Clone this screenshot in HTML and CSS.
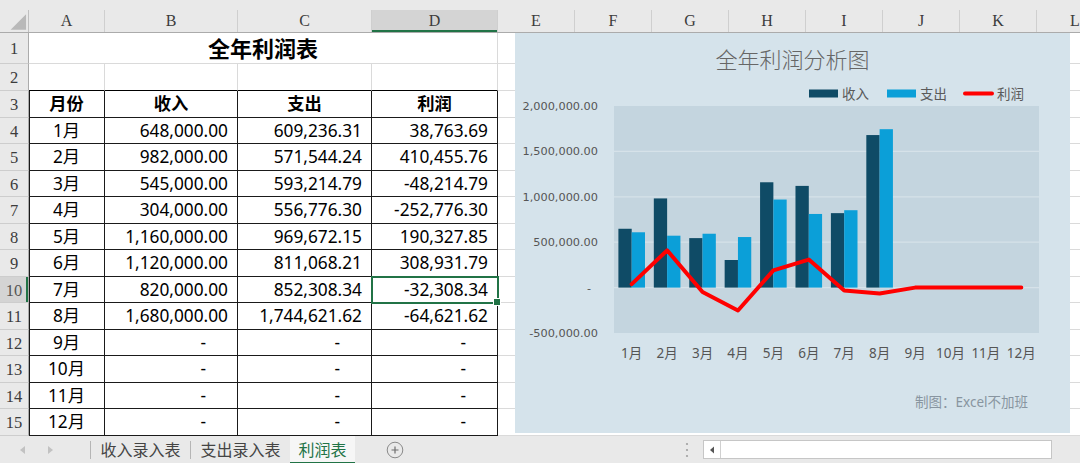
FILE: index.html
```html
<!DOCTYPE html>
<html lang="zh">
<head>
<meta charset="utf-8">
<title>全年利润表</title>
<link rel="stylesheet" href="styles.css">
</head>
<body>
<div class="app">
  <div class="colhdr">
    <div class="ch corner"><svg width="29" height="22" viewBox="0 0 29 22"><polygon points="27,4 27,20 11,20" fill="#b9b9b9"/></svg></div>
    <div class="ch">A</div><div class="ch">B</div><div class="ch">C</div><div class="ch sel">D</div>
    <div class="ch">E</div><div class="ch">F</div><div class="ch">G</div><div class="ch">H</div>
    <div class="ch">I</div><div class="ch">J</div><div class="ch">K</div><div class="ch">L</div>
  </div>

  <div class="sheet">
    <div class="c rh">1</div><div class="c title">全年利润表</div><div class="c rest"></div>
    <div class="c rh">2</div><div class="c top"></div><div class="c top"></div><div class="c top"></div><div class="c top"></div><div class="c rest"></div>

    <div class="c rh">3</div><div class="c t first hd">月份</div><div class="c t hd">收入</div><div class="c t hd">支出</div><div class="c t hd">利润</div><div class="c rest"></div>
    <div class="c rh">4</div><div class="c t first ctr">1月</div><div class="c t num">648,000.00</div><div class="c t num">609,236.31</div><div class="c t num">38,763.69</div><div class="c rest"></div>
    <div class="c rh">5</div><div class="c t first ctr">2月</div><div class="c t num">982,000.00</div><div class="c t num">571,544.24</div><div class="c t num">410,455.76</div><div class="c rest"></div>
    <div class="c rh">6</div><div class="c t first ctr">3月</div><div class="c t num">545,000.00</div><div class="c t num">593,214.79</div><div class="c t num">-48,214.79</div><div class="c rest"></div>
    <div class="c rh">7</div><div class="c t first ctr">4月</div><div class="c t num">304,000.00</div><div class="c t num">556,776.30</div><div class="c t num">-252,776.30</div><div class="c rest"></div>
    <div class="c rh">8</div><div class="c t first ctr">5月</div><div class="c t num">1,160,000.00</div><div class="c t num">969,672.15</div><div class="c t num">190,327.85</div><div class="c rest"></div>
    <div class="c rh">9</div><div class="c t first ctr">6月</div><div class="c t num">1,120,000.00</div><div class="c t num">811,068.21</div><div class="c t num">308,931.79</div><div class="c rest"></div>
    <div class="c rh selr">10</div><div class="c t first ctr">7月</div><div class="c t num">820,000.00</div><div class="c t num">852,308.34</div><div class="c t num selc">-32,308.34</div><div class="c rest"></div>
    <div class="c rh">11</div><div class="c t first ctr">8月</div><div class="c t num">1,680,000.00</div><div class="c t num">1,744,621.62</div><div class="c t num">-64,621.62</div><div class="c rest"></div>
    <div class="c rh">12</div><div class="c t first ctr">9月</div><div class="c t dash">-</div><div class="c t dash">-</div><div class="c t dash">-</div><div class="c rest"></div>
    <div class="c rh">13</div><div class="c t first ctr">10月</div><div class="c t dash">-</div><div class="c t dash">-</div><div class="c t dash">-</div><div class="c rest"></div>
    <div class="c rh">14</div><div class="c t first ctr">11月</div><div class="c t dash">-</div><div class="c t dash">-</div><div class="c t dash">-</div><div class="c rest"></div>
    <div class="c rh">15</div><div class="c t first ctr">12月</div><div class="c t dash">-</div><div class="c t dash">-</div><div class="c t dash">-</div><div class="c rest"></div>
  </div>

  <div class="chart">
    <svg width="555" height="400" viewBox="0 0 555 400">
      <text x="277.5" y="34.5" class="ttl" text-anchor="middle">全年利润分析图</text>

      <rect x="294" y="56.5" width="29" height="8" fill="#0f4b66"/>
      <text x="327" y="65.5" class="lg">收入</text>
      <rect x="372" y="56.5" width="29" height="8" fill="#0b9fd8"/>
      <text x="405" y="65.5" class="lg">支出</text>
      <line x1="450" y1="60.5" x2="477" y2="60.5" stroke="#ff0000" stroke-width="4" stroke-linecap="round"/>
      <text x="482" y="65.5" class="lg">利润</text>

      <rect x="99" y="73" width="425" height="227" fill="#c4d5df"/>
      <g stroke="#d6e2e9" stroke-width="1.2">
        <line x1="99" y1="118.4" x2="524" y2="118.4"/>
        <line x1="99" y1="163.8" x2="524" y2="163.8"/>
        <line x1="99" y1="209.2" x2="524" y2="209.2"/>
        <line x1="99" y1="254.6" x2="524" y2="254.6"/>
      </g>

      <g fill="#0f4b66">
        <rect x="103.4" y="195.76" width="13.3" height="58.84"/>
        <rect x="138.82" y="165.43" width="13.3" height="89.17"/>
        <rect x="174.23" y="205.11" width="13.3" height="49.49"/>
        <rect x="209.65" y="227" width="13.3" height="27.6"/>
        <rect x="245.07" y="149.27" width="13.3" height="105.33"/>
        <rect x="280.48" y="152.9" width="13.3" height="101.7"/>
        <rect x="315.9" y="180.14" width="13.3" height="74.46"/>
        <rect x="351.32" y="102.06" width="13.3" height="152.54"/>
      </g>
      <g fill="#0b9fd8">
        <rect x="116.7" y="199.28" width="13.3" height="55.32"/>
        <rect x="152.12" y="202.7" width="13.3" height="51.9"/>
        <rect x="187.53" y="200.74" width="13.3" height="53.86"/>
        <rect x="222.95" y="204.04" width="13.3" height="50.56"/>
        <rect x="258.37" y="166.55" width="13.3" height="88.05"/>
        <rect x="293.78" y="180.96" width="13.3" height="73.64"/>
        <rect x="329.2" y="177.21" width="13.3" height="77.39"/>
        <rect x="364.62" y="96.19" width="13.3" height="158.41"/>
      </g>

      <polyline fill="none" stroke="#ff0000" stroke-width="4" stroke-linejoin="round" stroke-linecap="round"
        points="116.71,251.08 152.13,217.33 187.54,258.98 222.96,277.55 258.38,237.32 293.79,226.55 329.21,257.53 364.63,260.47 400.04,254.6 435.46,254.6 470.88,254.6 506.29,254.6"/>

      <g class="yl" text-anchor="end">
        <text x="83" y="77">2,000,000.00</text>
        <text x="83" y="122.4">1,500,000.00</text>
        <text x="83" y="167.8">1,000,000.00</text>
        <text x="83" y="213.2">500,000.00</text>
        <text x="76" y="258.6">-</text>
        <text x="83" y="304">-500,000.00</text>
      </g>

      <g class="xl" text-anchor="middle">
        <text x="116.71" y="325">1月</text>
        <text x="152.13" y="325">2月</text>
        <text x="187.54" y="325">3月</text>
        <text x="222.96" y="325">4月</text>
        <text x="258.38" y="325">5月</text>
        <text x="293.79" y="325">6月</text>
        <text x="329.21" y="325">7月</text>
        <text x="364.63" y="325">8月</text>
        <text x="400.04" y="325">9月</text>
        <text x="435.46" y="325">10月</text>
        <text x="470.88" y="325">11月</text>
        <text x="506.29" y="325">12月</text>
      </g>

      <text x="513" y="374" class="ft" text-anchor="end">制图：Excel不加班</text>
    </svg>
  </div>

  <div class="tabs">
    <div class="nav">
      <svg width="90" height="28" viewBox="0 0 90 28">
        <polygon points="20,14 25,10 25,18" fill="#c2c2c2"/>
        <polygon points="53,14 48,10 48,18" fill="#c2c2c2"/>
      </svg>
    </div>
    <span class="sep"></span>
    <div class="tab">收入录入表</div>
    <span class="sep"></span>
    <div class="tab">支出录入表</div>
    <div class="tab active">利润表</div>
    <div class="add">
      <svg width="18" height="18" viewBox="0 0 18 18">
        <circle cx="9" cy="9" r="7.8" fill="none" stroke="#8a8a8a" stroke-width="1"/>
        <path d="M9 5.5v7M5.5 9h7" stroke="#6f6f6f" stroke-width="1.2"/>
      </svg>
    </div>
    <div class="spacer"></div>
    <div class="dots">
      <svg width="4" height="16" viewBox="0 0 4 16"><circle cx="2" cy="2" r="1.1" fill="#a0a0a0"/><circle cx="2" cy="8" r="1.1" fill="#a0a0a0"/><circle cx="2" cy="14" r="1.1" fill="#a0a0a0"/></svg>
    </div>
    <div class="hscroll">
      <div class="harrow"><svg width="6" height="8" viewBox="0 0 6 8"><polygon points="1,4 5,0.5 5,7.5" fill="#555"/></svg></div>
      <div class="track"></div>
    </div>
  </div>
</div>
</body>
</html>
```

FILE: styles.css
```css
* { box-sizing: border-box; margin: 0; padding: 0; }
html, body { width: 1080px; height: 463px; overflow: hidden; background: #ffffff; }
body { font-family: "Noto Sans", "Noto Sans CJK SC", sans-serif; color: #000; }

.app { position: relative; width: 1080px; height: 463px; overflow: hidden; display: flex; flex-direction: column; }

/* column header */
.colhdr {
  display: grid;
  grid-template-columns: 29px 76px 133px 134px 126px repeat(8, 77px);
  width: 1114px;
  height: 33px;
  padding-top: 10px;
  background: #e9e9e9;
  border-bottom: 1px solid #ababab;
  flex: none;
}
.ch {
  display: flex; align-items: center; justify-content: center;
  border-right: 1px solid #cfcfcf;
  font-family: "Liberation Serif", serif; font-size: 16px; color: #3c3c3c;
}
.ch.corner { border-right-color: #c0c0c0; }
.ch.sel { background: #d4d4d4; box-shadow: inset 0 -2px 0 #217346; }

/* sheet grid */
.sheet {
  display: grid;
  grid-template-columns: 29px 76px 133px 134px 126px 582px;
  grid-template-rows: 31px 27px repeat(13, 26.5px);
  flex: none;
}
.c {
  display: flex; align-items: center;
  border-right: 1px solid #dadada; border-bottom: 1px solid #dadada;
  font-size: 17.3px; white-space: nowrap; overflow: hidden;
  line-height: 1;
}
.rh {
  justify-content: center;
  background: #e9e9e9;
  border-right-color: #ababab; border-bottom-color: #cdcdcd;
  font-family: "Liberation Serif", serif; font-size: 16.5px; color: #3c3c3c;
  padding-top: 3px;
}
.rh.selr { background: #d4d4d4; color: #555; box-shadow: inset -2px 0 0 #217346; }
.rest { border-right: 0; }
.title { grid-column: span 4; justify-content: center; font-weight: 700; font-size: 22px; }
.top { border-bottom-color: #000; }
.t { border-right-color: #1a1a1a; border-bottom-color: #1a1a1a; }
.t.first { box-shadow: inset 1px 0 0 #1a1a1a; }
.hd { justify-content: center; font-weight: 700; }
.ctr { justify-content: center; }
.num { justify-content: flex-end; padding-right: 9px; }
.dash { justify-content: flex-end; padding-right: 31px; }
.selc { position: relative; overflow: visible; outline: 2px solid #217346; outline-offset: -1px; }
.selc::after {
  content: ""; position: absolute; right: -4px; bottom: -4px;
  width: 6px; height: 6px; background: #217346; border: 1px solid #fff;
}

/* floating chart object */
.chart {
  position: absolute; left: 515px; top: 33px;
  width: 555px; height: 400px;
  background: #d5e3eb;
}
.chart svg { display: block; }
.ttl { font-family: "Noto Sans CJK SC", sans-serif; font-size: 22px; font-weight: 300; fill: #666; }
.lg { font-family: "Noto Sans CJK SC", sans-serif; font-size: 13.5px; fill: #5a5a5a; }
.yl text { font-family: "DejaVu Sans", sans-serif; font-size: 11.3px; fill: #555; }
.xl text { font-family: "Noto Sans", "Noto Sans CJK SC", sans-serif; font-size: 13.5px; fill: #555; }
.ft { font-family: "Noto Sans", "Noto Sans CJK SC", sans-serif; font-size: 13.5px; fill: #8895a0; }

/* sheet tabs bar */
.tabs {
  display: flex; align-items: center;
  height: 28px; flex: none;
  background: #e9e9e9;
  font-size: 16px; color: #444;
}
.nav { width: 90px; height: 28px; }
.nav svg { display: block; }
.sep { width: 1px; height: 18px; background: #b5b5b5; flex: none; }
.tab {
  height: 28px; display: flex; align-items: center; justify-content: center;
  font-family: "Noto Sans CJK SC", sans-serif;
  width: 99px; padding-bottom: 2px;
}
.tab.active {
  width: 65px; color: #217346; background: #f6f6f6;
  box-shadow: inset 0 -2px 0 #217346;
}
.add { width: 80px; display: flex; justify-content: center; align-items: center; }
.add svg { display: block; }
.spacer { flex: 1; }
.dots { width: 14px; display: flex; justify-content: center; margin-right: 9px; }
.dots svg { display: block; }
.hscroll {
  width: 349px; height: 19px; margin-right: 28px;
  display: flex; background: #fff; border: 1px solid #c6c6c6;
}
.harrow { width: 17px; display: flex; align-items: center; justify-content: center; border-right: 1px solid #d0d0d0; }
.harrow svg { display: block; }
.track { flex: 1; }
```
